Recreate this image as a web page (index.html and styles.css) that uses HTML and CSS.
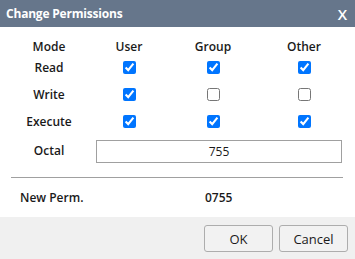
FILE: index.html
```html
<!DOCTYPE html>
<html lang="en">
<head>
    <meta charset="UTF-8">
    <meta name="viewport" content="width=device-width, initial-scale=1.0">
    <title>Change Permissions</title>
    <link rel="stylesheet" href="styles.css">
</head>
<body>
    <div class="dialog">
        <div class="title-bar">
            <span class="title">Change Permissions</span>
            <span class="close">X</span>
        </div>
        <div class="dialog-body">
            <div class="perm-grid">
                <div class="head">Mode</div>
                <div class="head">User</div>
                <div class="head">Group</div>
                <div class="head">Other</div>

                <div class="label">Read</div>
                <div class="cell"><input type="checkbox" checked></div>
                <div class="cell"><input type="checkbox" checked></div>
                <div class="cell"><input type="checkbox" checked></div>

                <div class="label">Write</div>
                <div class="cell"><input type="checkbox" checked></div>
                <div class="cell"><input type="checkbox"></div>
                <div class="cell"><input type="checkbox"></div>

                <div class="label">Execute</div>
                <div class="cell"><input type="checkbox" checked></div>
                <div class="cell"><input type="checkbox" checked></div>
                <div class="cell"><input type="checkbox" checked></div>

                <div class="label">Octal</div>
                <div class="octal-cell"><input type="text" class="octal-input" value="755"></div>
            </div>
            <hr class="separator">
            <div class="new-perm">
                <span class="new-perm-label">New Perm.</span>
                <span class="new-perm-value">0755</span>
            </div>
        </div>
        <div class="dialog-footer">
            <button class="btn">OK</button>
            <button class="btn">Cancel</button>
        </div>
    </div>
</body>
</html>
```

FILE: styles.css
```css
/* Диалог смены прав */
body {
    margin: 0;
    padding: 0;
    background-color: #ffffff;
    font-family: 'Open Sans', 'Noto Sans', sans-serif;
    color: #1a1a1a;
}

.dialog {
    width: 355px;
    height: 259px;
    display: flex;
    flex-direction: column;
    background-color: #ffffff;
}

.title-bar {
    height: 27px;
    background-color: #66768b;
    color: white;
    display: flex;
    align-items: center;
    justify-content: space-between;
    padding: 0 8px 0 6px;
}

.title {
    font-weight: 700;
    font-size: 12px;
    letter-spacing: -0.2px;
}

.close {
    font-size: 15px;
    font-weight: 600;
}

.dialog-body {
    flex: 1;
    padding-top: 11px;
}

.perm-grid {
    display: grid;
    grid-template-columns: 78px 82px 86px 96px;
    grid-template-rows: 16px 27px 27px 27px 31px;
    padding-left: 10px;
    align-items: center;
    justify-items: center;
}

.head,
.label {
    font-size: 12px;
    font-weight: 600;
}

.cell {
    display: flex;
    align-items: center;
    justify-content: center;
}

.cell input {
    width: 13px;
    height: 13px;
    margin: 0;
}

.octal-cell {
    grid-column: 2 / 5;
    justify-self: start;
    padding-left: 8px;
}

.octal-input {
    box-sizing: border-box;
    width: 246px;
    height: 23px;
    border: 1px solid #a0a0a0;
    border-radius: 0;
    text-align: center;
    font-family: 'Open Sans', 'Noto Sans', sans-serif;
    font-size: 12px;
    color: #1a1a1a;
    padding: 0;
}

.separator {
    margin: 11px 12px 0 11px;
    border: none;
    border-top: 1px solid #a0a0a0;
}

.new-perm {
    display: flex;
    align-items: center;
    height: 39px;
    font-size: 12px;
    font-weight: 600;
}

.new-perm-label {
    width: 185px;
    padding-left: 20px;
}

.dialog-footer {
    height: 42px;
    background-color: #f0f0f0;
    display: flex;
    justify-content: flex-end;
    align-items: flex-start;
    gap: 6px;
    padding: 8px 7px 0 0;
    box-sizing: border-box;
}

.btn {
    width: 69px;
    height: 27px;
    background-color: #f2f2f2;
    border: 1px solid #adadad;
    border-radius: 3px;
    font-family: 'Open Sans', 'Noto Sans', sans-serif;
    font-size: 13px;
    color: #1a1a1a;
    cursor: pointer;
}

.btn:hover {
    background-color: #e5f1fb;
}
```
